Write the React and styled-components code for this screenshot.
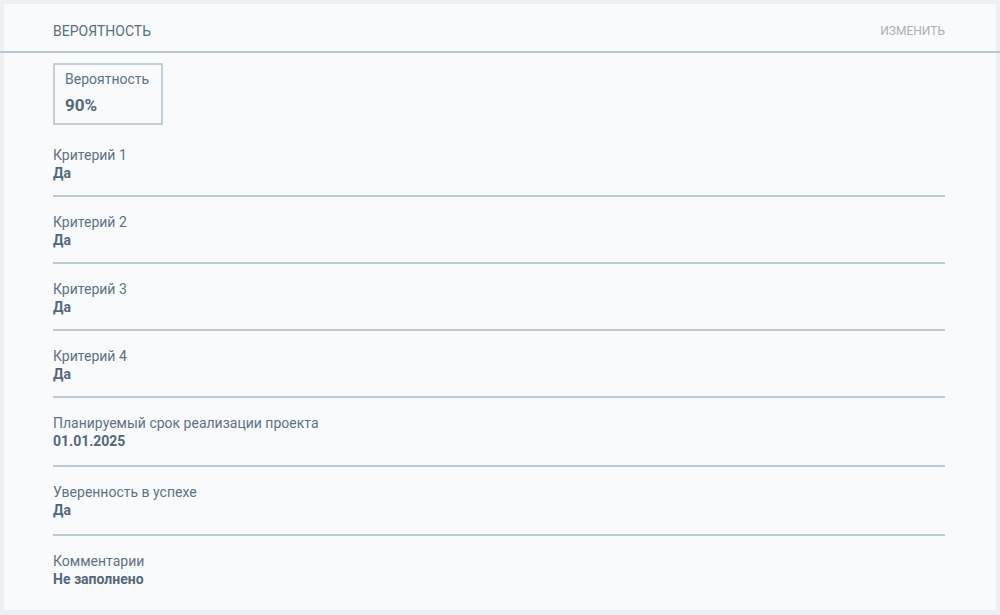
import React from 'react';
import styled, { createGlobalStyle } from 'styled-components';

const GlobalStyle = createGlobalStyle`
  html, body {
    margin: 0;
    padding: 0;
    background: #eef1f3;
  }
  body {
    font-family: Roboto, "Liberation Sans", Arial, sans-serif;
    -webkit-font-smoothing: antialiased;
  }
`;

const Page = styled.div`
  width: 1000px;
  height: 615px;
  padding: 4px 4px 5px;
  box-sizing: border-box;
  overflow: hidden;
`;

const Card = styled.section`
  background: #f8fafb;
  height: 100%;
  display: flex;
  flex-direction: column;
`;

const Header = styled.header`
  display: flex;
  justify-content: space-between;
  align-items: flex-start;
  margin: 0 -4px;
  padding: 18px 55px 10px 53px;
  border-bottom: 2px solid #b9c8d2;
  height: 19px;
`;

const Title = styled.h2`
  margin: 0;
  font-size: 14px;
  line-height: 18px;
  font-weight: 400;
  color: #5a6f82;
  text-transform: uppercase;
`;

const EditLink = styled.button`
  border: 0;
  background: none;
  padding: 0;
  font-family: inherit;
  font-size: 12px;
  line-height: 18px;
  color: #a9b0b6;
  text-transform: uppercase;
  cursor: pointer;
`;

const Body = styled.div`
  padding: 10px 51px 0 49px;
  display: flex;
  flex-direction: column;
`;

const ScoreBox = styled.div`
  width: 110px;
  box-sizing: border-box;
  border: 2px solid #c3d0d9;
  padding: 6px 10px 7px;
  margin-bottom: 5px;
`;

const ScoreLabel = styled.div`
  font-size: 14px;
  line-height: 16px;
  color: #5d7286;
`;

const ScoreValue = styled.div`
  margin-top: 7px;
  font-size: 17px;
  line-height: 22px;
  font-weight: 700;
  color: #56697c;
`;

const Field = styled.div`
  padding: 16px 0 ${p => (p.$tall ? 15 : 13)}px;
  border-bottom: ${p => (p.$last ? 'none' : '2px solid #bccad3')};
`;

const FieldLabel = styled.div`
  font-size: 14px;
  line-height: 18px;
  color: #5d7286;
`;

const FieldValue = styled.div`
  font-size: 14px;
  line-height: 18px;
  font-weight: 700;
  color: #54687b;
`;

const fields = [
  { label: 'Критерий 1', value: 'Да' },
  { label: 'Критерий 2', value: 'Да' },
  { label: 'Критерий 3', value: 'Да' },
  { label: 'Критерий 4', value: 'Да' },
  { label: 'Планируемый срок реализации проекта', value: '01.01.2025', tall: true },
  { label: 'Уверенность в успехе', value: 'Да', tall: true },
  { label: 'Комментарии', value: 'Не заполнено' },
];

export default function App() {
  return (
    <Page>
      <GlobalStyle />
      <Card>
        <Header>
          <Title>Вероятность</Title>
          <EditLink>Изменить</EditLink>
        </Header>
        <Body>
          <ScoreBox>
            <ScoreLabel>Вероятность</ScoreLabel>
            <ScoreValue>90%</ScoreValue>
          </ScoreBox>
          {fields.map((f, i) => (
            <Field key={f.label} $tall={f.tall} $last={i === fields.length - 1}>
              <FieldLabel>{f.label}</FieldLabel>
              <FieldValue>{f.value}</FieldValue>
            </Field>
          ))}
        </Body>
      </Card>
    </Page>
  );
}
